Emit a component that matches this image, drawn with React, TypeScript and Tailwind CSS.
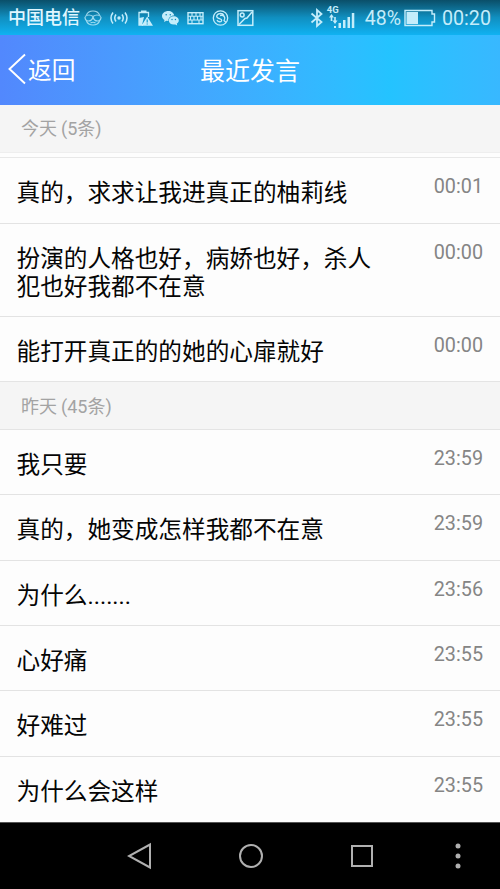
import React from "react";

type Message = { text: string; dots?: string; time: string; height: string };

const today: Message[] = [
  { text: "真的，求求让我进真正的柚莉线", time: "00:01", height: "h-[66px]" },
  { text: "扮演的人格也好，病娇也好，杀人犯也好我都不在意", time: "00:00", height: "h-[93px]" },
  { text: "能打开真正的的她的心扉就好", time: "00:00", height: "h-[64px]" },
];

const yesterday: Message[] = [
  { text: "我只要", time: "23:59", height: "h-[65px]" },
  { text: "真的，她变成怎样我都不在意", time: "23:59", height: "h-[65.5px]" },
  { text: "为什么", dots: ".......", time: "23:56", height: "h-[65.5px]" },
  { text: "心好痛", time: "23:55", height: "h-[65px]" },
  { text: "好难过", time: "23:55", height: "h-[65.5px]" },
  { text: "为什么会这样", time: "23:55", height: "h-[65.5px]" },
];

function Rows({ items }: { items: Message[] }) {
  return (
    <ul>
      {items.map((m, i) => (
        <li
          key={i}
          className={`flex items-start justify-between bg-[#fdfdfd] pl-[16.5px] pr-[17px] ${m.height} ${
            i < items.length - 1 ? "border-b border-[#e3e3e3]" : ""
          }`}
        >
          <p className="w-[362px] pt-[20px] text-[23.65px] leading-[27.7px] text-[#050505]">
            {m.text}
            {m.dots && <span className="font-['Roboto',sans-serif] leading-none">{m.dots}</span>}
          </p>
          <time className="pt-[17px] font-['Roboto',sans-serif] text-[19.8px] leading-[24px] text-[#858585]">
            {m.time}
          </time>
        </li>
      ))}
    </ul>
  );
}

function StatusBar() {
  return (
    <div className="flex h-[35px] items-center bg-linear-to-b from-[#0a4f69] via-[#108fc0] via-50% to-[#10b2f2] pl-[8px] pr-[9px] text-[#c4edfb]">
      <span className="w-[74px] whitespace-nowrap text-[18px] font-medium leading-[34px] -mt-[3px] text-[#e0f7ff]">中国电信</span>
      <div className="ml-[2px] flex items-center gap-[8px]">
        <svg width="18" height="18" viewBox="0 0 18 18" fill="none" stroke="currentColor" strokeWidth="1.2" opacity=".8">
          <path d="M2.500 6Q4 2 9 2t6.500 4M2.500 12Q4 16 9 16t6.500-4" />
          <path d="M1 7.500Q5 4.500 9 7.500 13 4.500 17 7.500M1 8q0 4 3.500 4T9 8q1 4 4.500 4T17 8M6.500 14q2.500-1.500 5 0" />
        </svg>
        <svg width="18" height="18" viewBox="0 0 18 18" fill="none" stroke="currentColor" strokeWidth="1.5">
          <circle cx="9" cy="9" r="1.700" fill="currentColor" stroke="none" />
          <path d="M6 5.500q-2.500 3.500 0 7M12 5.500q2.500 3.500 0 7M3 3.500Q-1 9 3 14.500M15 3.500q4 5.500 0 11" />
        </svg>
        <svg width="17" height="18" viewBox="0 0 17 18">
          <path fill="none" stroke="currentColor" strokeWidth="1.300" d="M12.500 8V3.500H3V16h4" />
          <path fill="currentColor" d="M5 1.500h5.500V4H5zM3 9l5-1-2 8H3zM11.200 7.500 17 16.700H5.500z" />
          <path d="M11.200 10.500v3M11.200 14.500v1" stroke="#129bcd" strokeWidth="1.200" />
        </svg>
        <svg width="18" height="18" viewBox="0 0 18 18">
          <path fill="currentColor" d="M7.300 2C3.900 2 1 4.200 1 7c0 1.700 1 3 2.500 3.900L3 13l2.400-1.200 2 .3C7.100 8.800 9.700 6.500 13.200 6.500 12.800 4 10.300 2 7.300 2Z" />
          <path fill="currentColor" d="M12.700 7.300c-2.800 0-4.900 1.800-4.900 4.200 0 2.300 2.100 4.100 4.900 4.100l1.600-.2 1.900 1-.4-1.800c1.200-.7 2-1.800 2-3.100 0-2.400-2.300-4.200-5.100-4.200Z" />
          <g fill="#138bb9"><circle cx="5.200" cy="5.800" r=".8" /><circle cx="9.300" cy="5.800" r=".8" /><circle cx="11" cy="10.500" r=".7" /><circle cx="14.400" cy="10.500" r=".7" /></g>
        </svg>
        <svg width="17" height="18" viewBox="0 0 17 18" fill="none" stroke="currentColor" strokeWidth="1.400">
          <rect x="1" y="3.700" width="15" height="11" />
          <path d="M1 7.300h15M1 11h15M5 4v3.300M9 4v3.300M13 4v3.300M3.500 7.300V11M7 7.300V11M10.500 7.300V11M14 7.300V11M5 11v3.500M12 11v3.500" strokeWidth="1.100" />
        </svg>
        <svg width="17" height="18" viewBox="0 0 17 18" fill="none" stroke="currentColor" strokeWidth="1.300">
          <circle cx="8.500" cy="9" r="7.200" />
          <path d="M12 6.500C10.500 3.500 5 4 4.700 7.300c0 3 5.300 1.700 5 4.200-.3 2-4 1.500-4.700-.5M8 6.500c4-1 6 2 4 5l2 2" />
        </svg>
        <svg width="17" height="18" viewBox="0 0 17 18" fill="none" stroke="currentColor" strokeWidth="1.500">
          <rect x="1" y="1.700" width="14.800" height="14.600" />
          <circle cx="5.200" cy="6" r="1.900" />
          <path d="M2 15.500 8 9.500l2-.5 5-6" />
        </svg>
      </div>
      <div className="ml-auto flex items-center font-['Roboto',sans-serif]">
        <svg className="-ml-[3px]" width="14" height="20" viewBox="0 0 14 20" fill="none" stroke="currentColor" strokeWidth="1.800">
          <path d="m1.500 5.500 10 8.500L7 18V2l4.500 4-10 8.500" />
        </svg>
        <div className="ml-[3px] -mt-[1px] flex w-[28px] flex-col">
          <span className="h-[8px] text-[9.500px] font-bold leading-[8px]">4G</span>
          <svg className="-mt-[1px]" width="28" height="16" viewBox="0 0 28 16" fill="currentColor">
            <path d="M4.500 1 7 4.500H5.300V8H3.700V4.500H2zM8 11 5.500 7.500h1.700V4h1.600v3.500h1.700zM11.500 10H14v5h-2.500zM16 7h2.500v8H16zM20.500 4H23v11h-2.500zM24.800 0h2.500v15h-2.500zM7 13h2v2H7z" />
          </svg>
        </div>
        <span className="ml-[10px] pt-[2px] text-[19.500px] leading-[34px]">48%</span>
        <svg className="ml-[3px]" width="32" height="18" viewBox="0 0 32 18">
          <path fill="none" stroke="currentColor" strokeWidth="1.400" d="M1 1.500h27V5h2.500v8H28v3.500H1z" />
          <path fill="currentColor" d="M2.500 3H14v12H2.500z" />
        </svg>
        <span className="ml-[6px] pt-[3px] text-[19.700px] leading-[34px]">00:20</span>
      </div>
    </div>
  );
}

export default function App() {
  return (
    <main className="flex h-[889px] w-[500px] flex-col overflow-hidden bg-[#fdfdfd] font-['Noto_Sans_CJK_SC',sans-serif]">
      <StatusBar />
      <header className="grid h-[70px] shrink-0 grid-cols-3 items-center bg-linear-to-r from-[#5288fd] via-[#24c3ff] via-78% to-[#38b8ff] pb-[2px] text-white">
        <button className="flex items-center pl-[8px]">
          <svg width="18" height="32" viewBox="0 0 18 32" fill="none" stroke="currentColor" strokeWidth="1.900">
            <path d="M17 1.500 1.500 16 17 30.500" />
          </svg>
          <span className="ml-[2px] text-[23.700px] leading-[36px]">返回</span>
        </button>
        <h1 className="text-center text-[25px] font-normal leading-[36px]">最近发言</h1>
      </header>
      <h2 className="h-[48px] shrink-0 border-b border-[#eeeeee] bg-[#f5f5f5] pl-[21px] text-[18px] font-normal leading-[45px] text-[#a3a3a3]">
        今天 <span className="font-['Roboto','Noto_Sans_CJK_SC',sans-serif]">(5条)</span>
      </h2>
      <div className="h-[5px] shrink-0 border-b border-[#e8e8e8] bg-[#fdfdfd]" />
      <Rows items={today} />
      <h2 className="h-[49px] shrink-0 border-y border-[#e4e4e4] bg-[#f5f5f5] pl-[21px] text-[18px] font-normal leading-[47px] text-[#a3a3a3]">
        昨天 <span className="font-['Roboto','Noto_Sans_CJK_SC',sans-serif]">(45条)</span>
      </h2>
      <Rows items={yesterday} />
      <nav className="flex h-[67px] shrink-0 items-center border-t border-[#555555] bg-black pl-[127px] text-[#b0b0b0]">
        <svg width="25" height="28" viewBox="0 0 25 28" fill="none" stroke="currentColor" strokeWidth="2">
          <path d="M23 2.500v23L2 14z" />
        </svg>
        <svg className="ml-[86px]" width="26" height="26" viewBox="0 0 26 26" fill="none" stroke="currentColor" strokeWidth="2">
          <circle cx="13" cy="13" r="11" />
        </svg>
        <svg className="ml-[86px]" width="24" height="24" viewBox="0 0 24 24" fill="none" stroke="currentColor" strokeWidth="2">
          <rect x="2" y="2" width="20" height="20" />
        </svg>
        <svg className="ml-[80px]" width="8" height="28" viewBox="0 0 8 28" fill="currentColor">
          <circle cx="4" cy="4" r="2.500" /><circle cx="4" cy="14" r="2.500" /><circle cx="4" cy="24" r="2.500" />
        </svg>
      </nav>
    </main>
  );
}
